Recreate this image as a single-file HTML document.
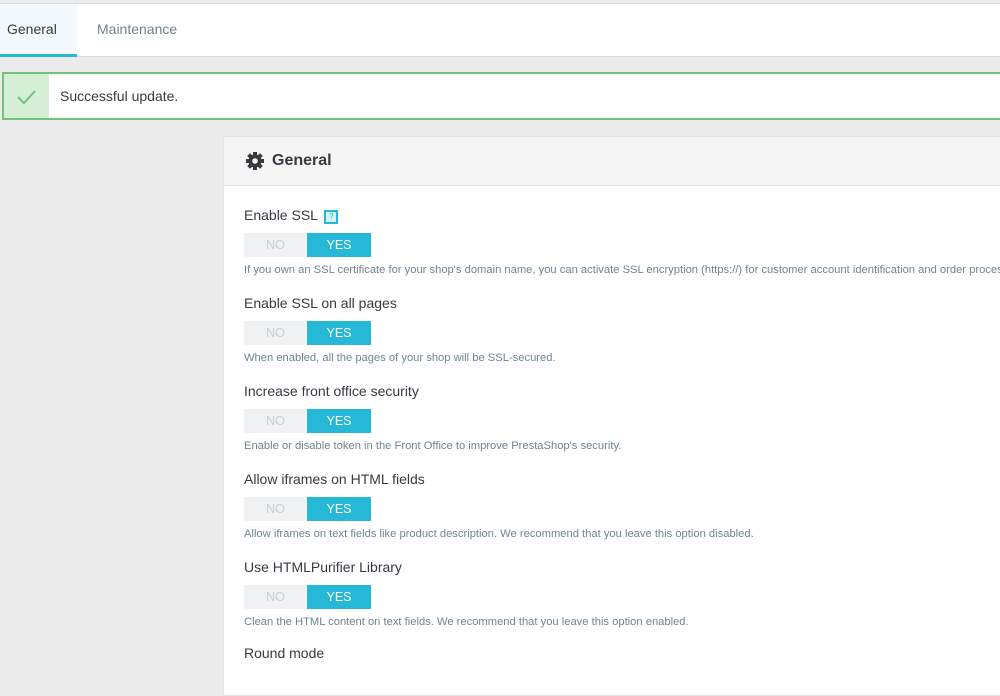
<!DOCTYPE html>
<html><head><meta charset="utf-8"><style>
*{box-sizing:border-box;margin:0;padding:0}
body{width:1000px;height:650px;overflow:hidden;background:#ebebeb;font-family:"Liberation Sans",sans-serif;position:relative;color:#363a41}
.top{position:absolute;left:0;top:3px;width:1000px;height:54px;background:#fff;border-top:1px solid #ddd;border-bottom:1px solid #ddd}
.tab{position:absolute;top:0;height:53px;line-height:50px;font-size:14px}
.t1{left:0;width:77px;background:#f2f8fb;padding-left:7px;color:#363a41;border-bottom:3px solid #25b9d7}
.t2{left:97px;color:#6c868e}
.alert{position:absolute;left:2px;top:72px;width:1010px;height:48px;background:#fff;border:2px solid #72c279}
.alert .ic{position:absolute;left:0;top:0;width:45px;height:44px;background:#d6f0d8}
.alert .tx{position:absolute;left:56px;top:14px;font-size:14px;color:#363a41}
.panel{position:absolute;left:223px;top:136px;width:800px;height:560px;background:#fff;border:1px solid #dbe6e9}
.ph{height:49px;background:#f5f5f5;border-bottom:1px solid #e5e5e5;position:relative}
.ph span{position:absolute;left:48px;top:15px;font-size:16px;font-weight:bold;color:#363a41}
.ph svg{position:absolute;left:21px;top:14px}
.row{position:absolute;left:20px}
.lbl{font-size:14px;color:#363a41;height:18px}
.sw{margin-top:8px;width:127px;height:24px;display:flex;font-size:12.5px}
.no{width:63px;background:#eff1f2;color:#c7d0d3;text-align:center;line-height:24px}
.yes{width:64px;background:#25b9d7;color:#fff;text-align:center;line-height:24px}
.help{margin-top:7px;font-size:11.2px;color:#6c868e;white-space:nowrap}
.q{display:inline-block;width:14px;height:14px;border:2px solid #25b9d7;background:#d9f2f8;color:#25b9d7;font-size:8px;line-height:10px;text-align:center;vertical-align:1px;margin-left:3px}
</style></head><body>
<div class="top"><div class="tab t1">General</div><div class="tab t2">Maintenance</div></div>
<div class="alert"><div class="ic"><svg width="45" height="44"><path d="M14 23 L20 29 L31 17" stroke="#72c279" stroke-width="2" fill="none"/></svg></div><div class="tx">Successful update.</div></div>
<div class="panel">
<div class="ph"><svg width="20" height="20" viewBox="0 0 20 20"><g fill="#363a41"><circle cx="10" cy="10" r="6.5"/><rect x="8" y="1" width="4" height="18"/><rect x="1" y="8" width="18" height="4"/><rect x="8" y="1" width="4" height="18" transform="rotate(45 10 10)"/><rect x="8" y="1" width="4" height="18" transform="rotate(-45 10 10)"/></g><circle cx="10" cy="10" r="2.8" fill="#f5f5f5"/></svg><span>General</span></div>
<div class="row" style="top:70px"><div class="lbl">Enable SSL <span class="q">?</span></div><div class="sw"><div class="no">NO</div><div class="yes">YES</div></div><div class="help">If you own an SSL certificate for your shop's domain name, you can activate SSL encryption (https://) for customer account identification and order processing.</div></div>
<div class="row" style="top:158px"><div class="lbl">Enable SSL on all pages</div><div class="sw"><div class="no">NO</div><div class="yes">YES</div></div><div class="help">When enabled, all the pages of your shop will be SSL-secured.</div></div>
<div class="row" style="top:246px"><div class="lbl">Increase front office security</div><div class="sw"><div class="no">NO</div><div class="yes">YES</div></div><div class="help">Enable or disable token in the Front Office to improve PrestaShop's security.</div></div>
<div class="row" style="top:334px"><div class="lbl">Allow iframes on HTML fields</div><div class="sw"><div class="no">NO</div><div class="yes">YES</div></div><div class="help">Allow iframes on text fields like product description. We recommend that you leave this option disabled.</div></div>
<div class="row" style="top:422px"><div class="lbl">Use HTMLPurifier Library</div><div class="sw"><div class="no">NO</div><div class="yes">YES</div></div><div class="help">Clean the HTML content on text fields. We recommend that you leave this option enabled.</div></div>
<div class="row" style="top:508px"><div class="lbl">Round mode</div></div>
</div>
</body></html>
